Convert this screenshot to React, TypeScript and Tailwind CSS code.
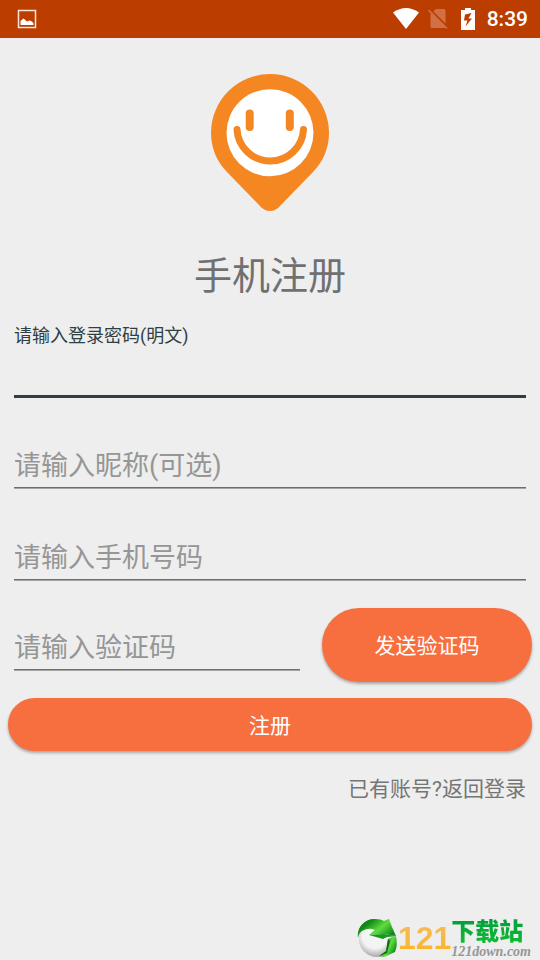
import type { InputHTMLAttributes } from "react";

const fieldLine =
  "h-12 w-full min-w-0 rounded-none border-b border-[#6e6e6e] bg-transparent pt-1 text-[27px] text-[#444] shadow-[0_1px_0_#a4a4a4] outline-none placeholder:text-[#969696] placeholder:opacity-100";

const pillButton =
  "rounded-full bg-[#f76f3f] pt-1 text-[21px] text-white shadow-[0_2px_3px_rgba(0,0,0,0.3)]";

function Field(props: InputHTMLAttributes<HTMLInputElement>) {
  return <input aria-label={props.placeholder} className={fieldLine} {...props} />;
}

function StatusBar() {
  return (
    <header className="flex h-[38px] items-center bg-[#bc3d00] pr-3 pl-[17px] text-white">
      <svg width="20" height="20" viewBox="0 0 20 20" fill="none" aria-hidden="true">
        <rect x="1.5" y="1.5" width="17" height="17" stroke="#fbe6dc" strokeWidth="1.5" />
        <path d="M3.5 16V12L6.500 9.500 10 12.500 12.500 11.500 15 12.500 16.500 14.500V16Z" fill="#fff" />
      </svg>
      <div className="ml-auto flex items-center">
        <svg width="26" height="22" viewBox="0 0 26 22" aria-hidden="true">
          <path d="M0 4.5Q13-4.5 26 4.5L13 21Z" fill="#fff" />
        </svg>
        <svg width="20" height="22" viewBox="0 0 20 22" className="ml-[9px]" aria-hidden="true">
          <path d="M8 1H16Q17.500 1 17.500 2.500V18.500Q17.500 20 16 20H4Q2.500 20 2.500 18.500V6Z" fill="#cf7045" />
          <path d="M1.500 1 20 19.500" stroke="#bc3d00" strokeWidth="2" />
          <path d="M.5 2 19 20.500" stroke="#cf7045" strokeWidth="1.700" />
        </svg>
        <svg width="14" height="22" viewBox="0 0 14 22" className="ml-[13px]" aria-hidden="true">
          <path d="M0 2H4V0H10V2H14V22H0Z" fill="#fff" />
          <path d="M10.500 5 4 6.500 3 12.500H6.500L4.500 18.500 11 10.500H7.500Z" fill="#bc3d00" />
        </svg>
        <span className="ml-3 font-['Roboto',sans-serif] text-[21px] leading-6 font-medium">8:39</span>
      </div>
    </header>
  );
}

function PinLogo() {
  return (
    <svg width="120" height="138" viewBox="0 0 120 138" fill="none" className="mx-auto" aria-hidden="true">
      <path
        d="M60 0A59 59 0 0 0 1 59C1 74 7 88 17 98L49 131Q54 137 60 137T71 131L103 98C113 88 119 74 119 59A59 59 0 0 0 60 0Z"
        fill="#f58723"
      />
      <circle cx="60" cy="58.800" r="43.500" fill="#fff" />
      <path d="M39.700 39.500V53M79.800 39.500V53" stroke="#f58723" strokeWidth="8" strokeLinecap="round" />
      <path d="M27 55.500A33.300 33.300 0 0 0 93.500 55.500" stroke="#f58723" strokeWidth="7" strokeLinecap="round" />
    </svg>
  );
}

function SiteMark() {
  return (
    <footer className="mt-auto flex items-center justify-end pr-[9px]">
      <svg width="41" height="40" viewBox="0 0 41 40" aria-hidden="true">
        <defs>
          <radialGradient id="ball" cx=".45" cy=".4" r=".6">
            <stop offset=".6" stopColor="#f4f4f4" />
            <stop offset="1" stopColor="#a8a8a8" />
          </radialGradient>
          <linearGradient id="leaf" x1="0" y1="0" x2="1" y2=".6">
            <stop offset="0" stopColor="#0a6a0e" />
            <stop offset=".3" stopColor="#128a18" />
            <stop offset=".65" stopColor="#5fdc40" />
            <stop offset="1" stopColor="#0f8a1a" />
          </linearGradient>
        </defs>
        <circle cx="20" cy="21" r="18" fill="url(#ball)" />
        <path d="M1 20C-1 9 9 0 18 1Q24 1 27 3L32 1 35 9 39 18 27 16 12 17 18 12Q12 9 5 13Q2 15 1 20Z" fill="url(#leaf)" />
        <path d="M12 17 27 16 39 18 30 19 26 21Z" fill="#149a1c" />
        <path d="M31 21 39 18Q41 27 38 34L27 39 22 38 29 34Z" fill="url(#leaf)" />
        <path d="M31 21 33 23 30 35 22 38 29 33Z" fill="#0b6911" />
      </svg>
      <span className="bg-linear-to-b from-[#f5bb60] to-[#fdb400] bg-clip-text font-['Liberation_Sans',sans-serif] text-[32px] leading-10 font-bold text-transparent">
        121
      </span>
      <div className="flex flex-col">
        <span className="bg-linear-to-b from-[#009b3c] to-[#12bc32] bg-clip-text font-['Noto_Sans_CJK_SC',sans-serif] text-[24px] leading-7 font-black text-transparent">
          下载站
        </span>
        <span className="font-['Liberation_Serif',serif] text-[14px] leading-4 font-bold text-[#969696] italic">
          121down.com
        </span>
      </div>
    </footer>
  );
}

export default function App() {
  return (
    <div className="flex min-h-screen flex-col bg-[#eee] font-['Roboto','Noto_Sans_CJK_SC',sans-serif]">
      <StatusBar />
      <main className="pt-9">
        <PinLogo />
        <h1 className="mt-10 text-center text-[38px] leading-12 text-[#707070]">手机注册</h1>

        <form className="mt-6" onSubmit={(e) => e.preventDefault()}>
          <div className="flex flex-col px-[14px]">
            <label htmlFor="password" className="text-[18px] leading-6 text-[#2f4043]">
              请输入登录密码(明文)
            </label>
            <input
              id="password"
              type="text"
              className="h-[50px] w-full border-b-3 border-[#2f4043] bg-transparent text-[27px] text-[#444] outline-none"
            />
          </div>
          <div className="mt-[42px] flex flex-col gap-11 px-[14px]">
            <Field type="text" placeholder="请输入昵称(可选)" />
            <Field type="tel" placeholder="请输入手机号码" />
          </div>

          <div className="mt-7 flex items-end gap-[22px] pr-2 pl-[14px]">
            <div className="min-w-0 flex-1 pb-3">
              <Field type="text" placeholder="请输入验证码" />
            </div>
            <button type="button" className={`h-[74px] w-[210px] ${pillButton}`}>
              发送验证码
            </button>
          </div>

          <div className="mt-4 px-2">
            <button type="submit" className={`h-[53px] w-full ${pillButton}`}>
              注册
            </button>
          </div>
        </form>

        <div className="mt-6 flex justify-end pr-[14px]">
          <a href="#login" className="text-[21px] leading-7 text-[#757575]">
            已有账号?返回登录
          </a>
        </div>
      </main>
      <SiteMark />
    </div>
  );
}
